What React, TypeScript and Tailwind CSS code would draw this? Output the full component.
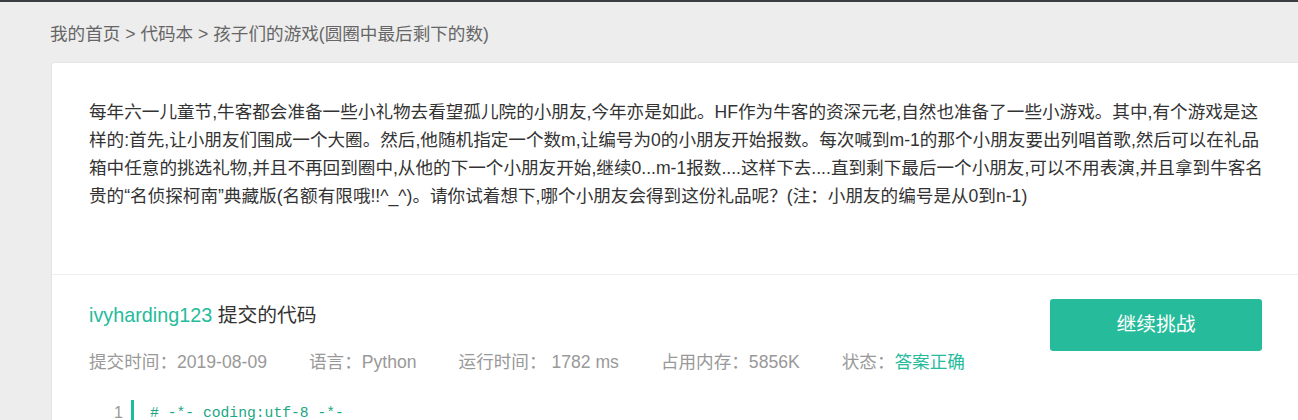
import React from "react";

const font = { fontFamily: '"Liberation Sans", "Noto Sans CJK SC", sans-serif' };

export default function App() {
  return (
    <div
      className="w-[1298px] h-[420px] overflow-hidden bg-[#ededed] border-t-2 border-[#3b3e43]"
      style={font}
    >
      <div className="pl-[50px] pt-[20px] text-[17.6px] leading-[24px] text-[#666]">
        我的首页 &gt; 代码本 &gt; 孩子们的游戏(圆圈中最后剩下的数)
      </div>
      <div className="ml-[51px] mt-[16px] w-[1249px] bg-white border border-[#e3e3e3] rounded-[3px]">
        <div className="px-[37px] pt-[35px] pb-[64px] border-b border-[#eeeeee]">
          <p className="w-[1172px] whitespace-nowrap text-[17.6px] leading-[28px] text-[#333]">
            每年六一儿童节,牛客都会准备一些小礼物去看望孤儿院的小朋友,今年亦是如此。HF作为牛客的资深元老,自然也准备了一些小游戏。其中,有个游戏是这
            <br />
            样的:首先,让小朋友们围成一个大圈。然后,他随机指定一个数m,让编号为0的小朋友开始报数。每次喊到m-1的那个小朋友要出列唱首歌,然后可以在礼品
            <br />
            箱中任意的挑选礼物,并且不再回到圈中,从他的下一个小朋友开始,继续0...m-1报数....这样下去....直到剩下最后一个小朋友,可以不用表演,并且拿到牛客名
            <br />
            贵的“名侦探柯南”典藏版(名额有限哦!!^_^)。请你试着想下,哪个小朋友会得到这份礼品呢？(注：小朋友的编号是从0到n-1)
          </p>
        </div>
        <div className="px-[37px] pt-[24px]">
          <div className="flex justify-between items-start">
            <div>
              <div className="mt-[3px] text-[19.8px] leading-[26px] text-[#333]">
                <span className="text-[#25bb9b]">ivyharding123</span> 提交的代码
              </div>
              <div className="mt-[22px] flex gap-[42px] text-[17.6px] leading-[24px] text-[#999]">
                <span>提交时间：2019-08-09</span>
                <span>语言：Python</span>
                <span>运行时间： 1782 ms</span>
                <span>占用内存：5856K</span>
                <span>
                  状态：<span className="text-[#25bb9b]">答案正确</span>
                </span>
              </div>
            </div>
            <button className="w-[212px] h-[52px] bg-[#25bb9b] rounded-[3px] text-white text-[19.8px]">
              继续挑战
            </button>
          </div>
          <div className="mt-[26px] flex items-start" style={{ fontFamily: '"Liberation Mono", "DejaVu Sans Mono", monospace' }}>
            <div className="w-[42px] pr-[8px] pt-[1px] text-right text-[16px] leading-[24px] text-[#999]" style={font}>
              1
            </div>
            <div className="w-[3px] h-[30px] bg-[#1abc9c]" />
            <div className="pl-[16px] pt-[1px] text-[14.7px] leading-[24px] text-[#1ba784] whitespace-pre">
              # -*- coding:utf-8 -*-
            </div>
          </div>
        </div>
      </div>
    </div>
  );
}
